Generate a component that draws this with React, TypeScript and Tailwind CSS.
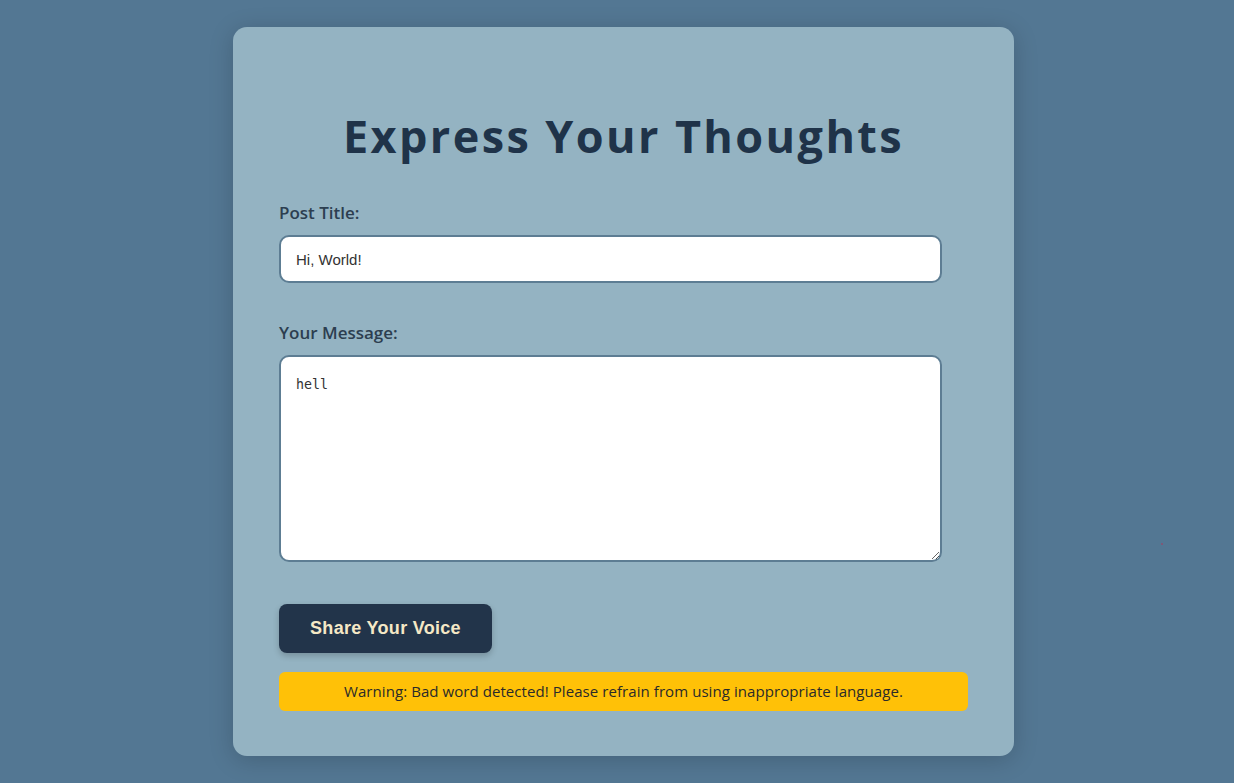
import { useState } from 'react'

export default function App() {
  const [title, setTitle] = useState('Hi, World!')
  const [message, setMessage] = useState('hell')

  return (
    <section className="min-h-screen bg-[#537793] flex justify-center pl-[13px] pt-[27px] pb-[27px] relative">
      <form
        onSubmit={(e) => e.preventDefault()}
        className="w-[781px] bg-[#94b3c2] rounded-[14px] px-[46px] pt-[82px] pb-[45px] shadow-[0_4px_24px_rgba(0,0,0,0.18)] font-['Open_Sans',sans-serif]"
      >
        <h1 className="text-center text-[45px] leading-[54px] font-bold text-[#1f3349] tracking-[2.4px] font-['Open_Sans',sans-serif]">
          Express Your Thoughts
        </h1>

        <label htmlFor="title" className="block mt-[38px] text-[17px] leading-[24px] font-semibold text-[#2c3e50]">
          Post Title:
        </label>
        <input
          id="title"
          type="text"
          value={title}
          onChange={(e) => setTitle(e.target.value)}
          className="block mt-[10px] w-[663px] h-[48px] px-[15px] bg-white border-2 border-[#5d7d93] rounded-[10px] text-[15px] text-[#333] font-['Liberation_Sans',Arial,sans-serif] outline-0"
        />

        <label htmlFor="message" className="block mt-[38px] text-[17px] leading-[24px] font-semibold text-[#2c3e50]">
          Your Message:
        </label>
        <textarea
          id="message"
          value={message}
          onChange={(e) => setMessage(e.target.value)}
          className="block mt-[10px] w-[663px] h-[207px] px-[15px] pt-[16px] pb-[15px] bg-white border-2 border-[#5d7d93] rounded-[10px] text-[13.3px] leading-[24px] text-[#333] font-['DejaVu_Sans_Mono',monospace] outline-0"
        />

        <button
          type="submit"
          className="block mt-[42px] w-[213px] h-[49px] bg-[#22344a] rounded-[8px] text-[18px] font-bold tracking-[0.3px] text-[#f5e8c6] font-['Liberation_Sans',Arial,sans-serif] shadow-[0_3px_6px_rgba(0,0,0,0.2)]"
        >
          Share Your Voice
        </button>

        <div className="mt-[19px] h-[39px] flex items-center justify-center bg-[#ffc107] rounded-[6px] text-[15px] tracking-[0.07px] text-[#2a2a2a]">
          Warning: Bad word detected! Please refrain from using inappropriate language.
        </div>
      </form>
      <span className="absolute left-[1161px] top-[543px] w-[2px] h-[2px] rounded-full bg-[#8a5070]" />
    </section>
  )
}
